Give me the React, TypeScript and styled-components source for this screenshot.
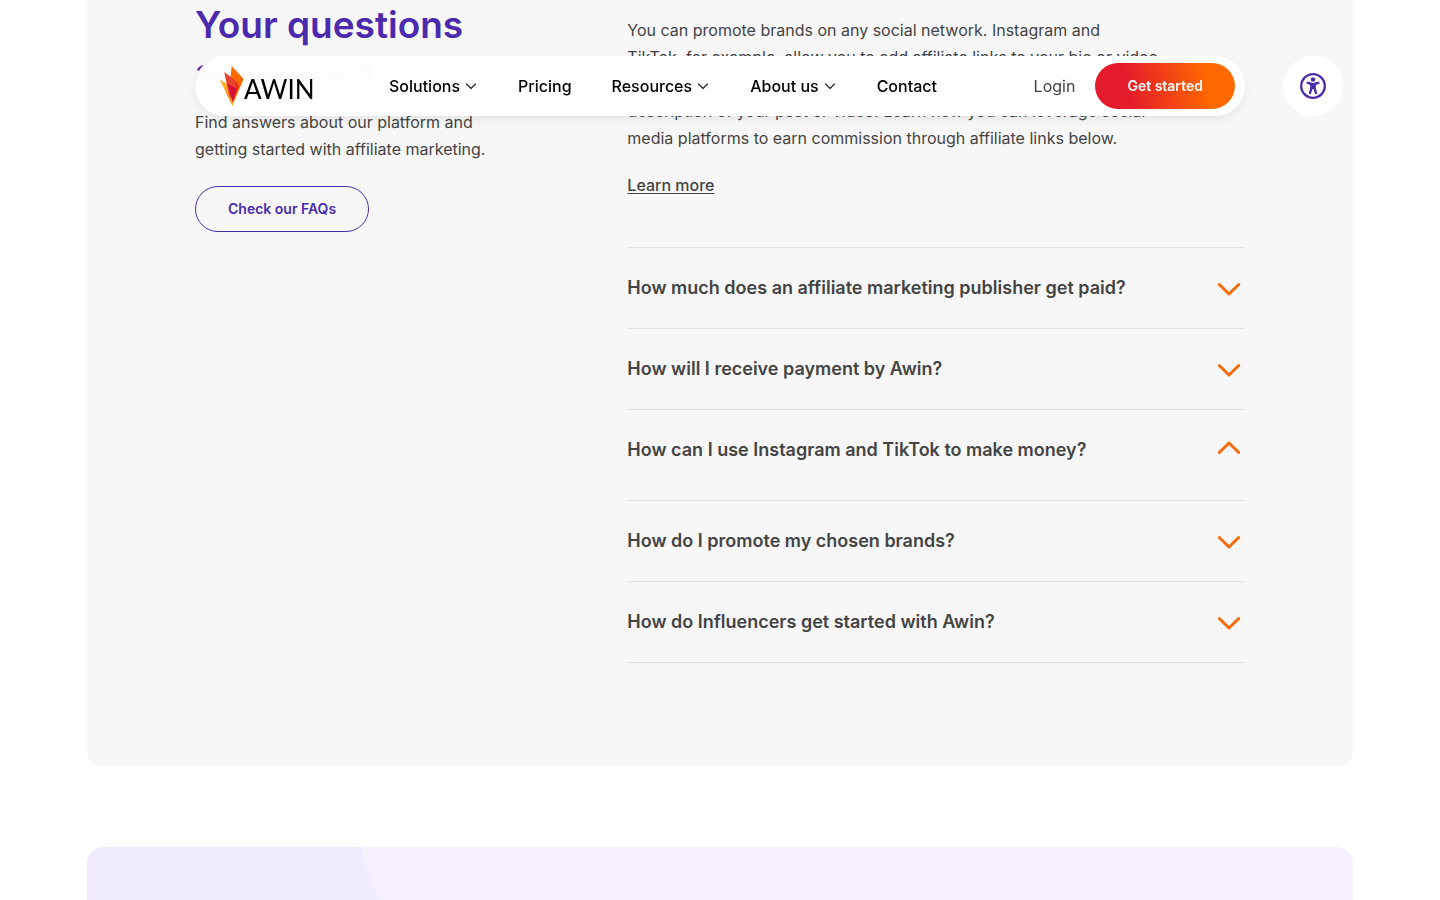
import React, { useState } from "react";
import styled, { createGlobalStyle } from "styled-components";

const GlobalStyle = createGlobalStyle`
  *, *::before, *::after { box-sizing: border-box; }
  body {
    margin: 0;
    background: #fff;
    color: #444;
    font-family: Inter, "Liberation Sans", sans-serif;
    font-size: 16px;
    line-height: 27px;
    overflow-x: hidden;
  }
  h2, h3, p { margin: 0; }
  button { font-family: inherit; cursor: pointer; }
`;

const Page = styled.div`
  padding: 0 87px;
  height: 100vh;
  overflow: hidden;
`;

const Header = styled.header`
  position: fixed;
  z-index: 10;
  top: 56px;
  left: 195px;
  right: 195px;
  height: 60px;
  padding: 0 10px 0 24px;
  display: flex;
  align-items: center;
  border-radius: 30px;
  background: rgba(255, 255, 255, 0.97);
  backdrop-filter: blur(4px);
  box-shadow: 0 4px 8px rgba(0, 0, 0, 0.07);
`;

const Logo = styled.a`
  display: flex;
  align-items: center;
  width: 170px;
  color: #000;
  font-family: Lato, sans-serif;
  font-size: 26px;
  line-height: 40px;
  text-decoration: none;
  svg { width: 25px; height: 42px; }
  span { padding-top: 5px; }
`;

const Nav = styled.nav`
  flex: 1;
  display: flex;
  gap: 40px;
`;

const navText = `
  padding: 0;
  border: 0;
  background: none;
  font-size: 16px;
  line-height: 27px;
  text-decoration: none;
  white-space: nowrap;
`;

const NavLink = styled.a`
  ${navText}
  color: #000;
  font-weight: 500;
`;

const NavButton = styled.button`
  ${navText}
  display: flex;
  align-items: center;
  gap: 4px;
  color: #000;
  font-weight: 500;
  svg { width: 14px; height: 12px; }
`;

const LoginLink = styled.a`
  ${navText}
  margin-right: 20px;
  color: #444;
`;

const Pill = styled.a<{ $filled?: boolean }>`
  display: inline-flex;
  align-items: center;
  justify-content: center;
  height: 46px;
  padding: 0 32px;
  border: ${(p) => (p.$filled ? "0" : "1px solid #4b2aad")};
  border-radius: 23px;
  background: ${(p) => (p.$filled ? "linear-gradient(80deg, #e41b2b 24%, #ff6900 80%)" : "none")};
  color: ${(p) => (p.$filled ? "#fff" : "#4b2aad")};
  font-size: 14px;
  font-weight: 600;
  line-height: 20px;
  text-decoration: none;
  white-space: nowrap;
`;

const AccessButton = styled.button`
  position: fixed;
  z-index: 10;
  top: 56px;
  right: 97px;
  width: 60px;
  height: 60px;
  padding: 0;
  display: grid;
  place-items: center;
  border: 0;
  border-radius: 50%;
  background: #fff;
`;

const FaqPanel = styled.section`
  display: grid;
  grid-template-columns: 7fr 10fr;
  padding: 1px 108px 104px;
  border-radius: 0 0 16px 16px;
  background: #f7f7f7;
`;

const Intro = styled.div`
  max-width: 320px;
`;

const Title = styled.h2`
  margin-bottom: 14px;
  color: #4b2aad;
  font-size: 37px;
  font-weight: 600;
  line-height: 47px;
`;

const IntroText = styled.p`
  margin-bottom: 23px;
`;

const Answer = styled.div`
  padding: 16px 72px 48px 0;
`;

const MoreLink = styled.a`
  display: inline-block;
  margin-top: 20px;
  color: #444;
  font-weight: 500;
  text-underline-offset: 2px;
`;

const Question = styled.h3<{ $open: boolean }>`
  border-top: 1px solid #e2e2e2;
  padding-bottom: ${(p) => (p.$open ? "10px" : "0")};
  &:last-child { border-bottom: 1px solid #e2e2e2; }
`;

const QuestionButton = styled.button`
  width: 100%;
  height: 80px;
  padding: 0 4px 2px 0;
  display: flex;
  align-items: center;
  justify-content: space-between;
  border: 0;
  background: none;
  color: #444;
  font-size: 18px;
  font-weight: 600;
  line-height: 27px;
  text-align: left;
`;

const Promo = styled.section`
  margin-top: 80px;
  border-radius: 16px;
  overflow: hidden;
  background: #f7f1fe;
  svg { display: block; width: 320px; height: 320px; }
`;

function SmallChevron() {
  return (
    <svg viewBox="0 0 14 12" fill="none" stroke="#333" strokeWidth="1.3" strokeLinecap="round" strokeLinejoin="round" aria-hidden="true">
      <path d="M2.5 4 L7 8.5 L11.5 4" />
    </svg>
  );
}

function Chevron({ up }: { up: boolean }) {
  return (
    <svg width="24" height="24" viewBox="0 0 24 24" fill="none" stroke="#f56a0a" strokeWidth="3" strokeLinecap="round" strokeLinejoin="round" aria-hidden="true">
      <path d={up ? "M2.3 15.5 L12 6 L21.7 15.5" : "M2.3 9.5 L12 19 L21.7 9.5"} />
    </svg>
  );
}

function Flame() {
  return (
    <svg viewBox="0 0 75 126" aria-hidden="true">
      <path d="M38 3 L74 42 L41 120 L30 80 Z" fill="#ff6a00" />
      <path d="M2 44 L30 60 L44 104 L41 124 Z" fill="#fbb02d" />
      <path d="M16 72 L34 96 L41 124 Z" fill="#f7931e" />
      <path d="M16 21 L48 46 L54 72 L41 104 L30 92 Z" fill="#e8432e" />
      <path d="M26 56 L55 72 L41 112 Z" fill="#d50f35" />
      <path d="M48 46 L59 64 L54 74 Z" fill="#e41b2b" />
    </svg>
  );
}

function AccessIcon() {
  return (
    <svg width="26" height="26" viewBox="0 0 26 26" aria-hidden="true">
      <circle cx="13" cy="13" r="11.8" fill="none" stroke="#4b2aad" strokeWidth="2.3" />
      <circle cx="13" cy="6.5" r="2.2" fill="#4b2aad" />
      <path d="M7.7 9.8 L11.6 11 V14.8 L10 20 M18.3 9.8 L14.4 11 V14.8 L16 20" fill="none" stroke="#4b2aad" strokeWidth="2.4" strokeLinecap="round" strokeLinejoin="round" />
      <path d="M10.5 10 H15.5 V16 H10.5 Z" fill="#4b2aad" />
    </svg>
  );
}

const menu = [
  { label: "Solutions", sub: true },
  { label: "Pricing", sub: false },
  { label: "Resources", sub: true },
  { label: "About us", sub: true },
  { label: "Contact", sub: false },
];

const questions = [
  "How much does an affiliate marketing publisher get paid?",
  "How will I receive payment by Awin?",
  "How can I use Instagram and TikTok to make money?",
  "How do I promote my chosen brands?",
  "How do Influencers get started with Awin?",
];

export default function App() {
  const [open, setOpen] = useState(2);
  return (
    <>
      <GlobalStyle />
      <Header>
        <Logo href="#">
          <Flame />
          <span>AWIN</span>
        </Logo>
        <Nav>
          {menu.map((m) =>
            m.sub ? (
              <NavButton key={m.label} type="button">
                {m.label}
                <SmallChevron />
              </NavButton>
            ) : (
              <NavLink key={m.label} href="#">{m.label}</NavLink>
            )
          )}
        </Nav>
        <LoginLink href="#">Login</LoginLink>
        <Pill $filled href="#">Get started</Pill>
      </Header>
      <AccessButton type="button" aria-label="Accessibility">
        <AccessIcon />
      </AccessButton>
      <Page>
        <FaqPanel>
          <Intro>
            <Title>Your questions answered</Title>
            <IntroText>Find answers about our platform and getting started with affiliate marketing.</IntroText>
            <Pill href="#">Check our FAQs</Pill>
          </Intro>
          <div>
            <Answer>
              <p>
                You can promote brands on any social network. Instagram and
                <br />
                TikTok, for example, allow you to add affiliate links to your bio or video
                descriptions. On YouTube, you can include your links within the
                description of your post or video. Learn how you can leverage social
                media platforms to earn commission through affiliate links below.
              </p>
              <MoreLink href="#">Learn more</MoreLink>
            </Answer>
            {questions.map((q, i) => (
              <Question key={q} $open={open === i}>
                <QuestionButton type="button" aria-expanded={open === i} onClick={() => setOpen(open === i ? -1 : i)}>
                  {q}
                  <Chevron up={open === i} />
                </QuestionButton>
              </Question>
            ))}
          </div>
        </FaqPanel>
        <Promo>
          <svg viewBox="0 0 320 320" aria-hidden="true">
            <path d="M0 0 H274 Q280 30 296 60 L320 320 H0 Z" fill="#f0ecfd" />
          </svg>
        </Promo>
      </Page>
    </>
  );
}
